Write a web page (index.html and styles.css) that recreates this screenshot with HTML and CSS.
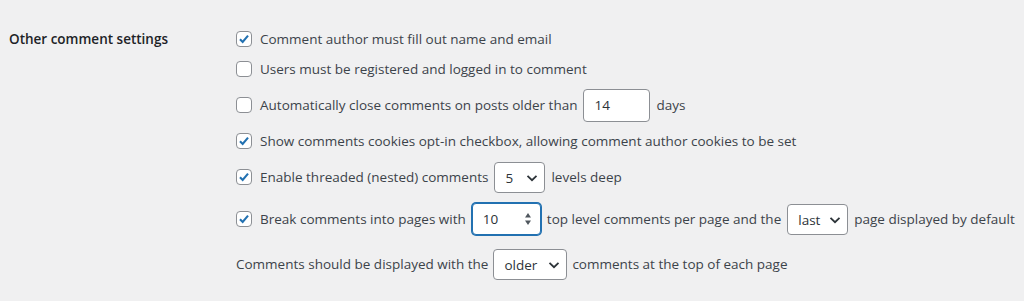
FILE: index.html
```html
<!DOCTYPE html>
<html lang="en">
<head>
    <meta charset="UTF-8">
    <title>Discussion Settings</title>
    <link rel="stylesheet" href="styles.css">
</head>
<body>
    <div class="form-row">
        <div class="row-label">Other comment settings</div>
        <div class="fieldset">
            <label class="opt">
                <span class="cb checked"><svg viewBox="0 0 16 16"><path d="M3.4 8.2 6.5 11.3 12.6 4.2" /></svg></span>
                Comment author must fill out name and email
            </label>
            <label class="opt">
                <span class="cb"></span>
                Users must be registered and logged in to comment
            </label>
            <label class="opt tall">
                <span class="cb"></span>
                Automatically close comments on posts older than
                <span class="field small-text">14</span>
                days
            </label>
            <label class="opt">
                <span class="cb checked"><svg viewBox="0 0 16 16"><path d="M3.4 8.2 6.5 11.3 12.6 4.2" /></svg></span>
                Show comments cookies opt-in checkbox, allowing comment author cookies to be set
            </label>
            <label class="opt tall">
                <span class="cb checked"><svg viewBox="0 0 16 16"><path d="M3.4 8.2 6.5 11.3 12.6 4.2" /></svg></span>
                Enable threaded (nested) comments
                <span class="select sel-5">5<svg viewBox="0 0 12 8"><path d="M1.5 1.8 6 6.2 10.5 1.8" /></svg></span>
                levels deep
            </label>
            <label class="opt tall">
                <span class="cb checked"><svg viewBox="0 0 16 16"><path d="M3.4 8.2 6.5 11.3 12.6 4.2" /></svg></span>
                Break comments into pages with
                <span class="field number focus">10
                    <span class="spin"><svg viewBox="0 0 8 16"><path d="M4 2 7 6.5 1 6.5Z M4 14 7 9.5 1 9.5Z" /></svg></span>
                </span>
                top level comments per page and the
                <span class="select sel-last">last<svg viewBox="0 0 12 8"><path d="M1.5 1.8 6 6.2 10.5 1.8" /></svg></span>
                page displayed by default
            </label>
            <p class="opt tall last">
                Comments should be displayed with the
                <span class="select sel-older">older<svg viewBox="0 0 12 8"><path d="M1.5 1.8 6 6.2 10.5 1.8" /></svg></span>
                comments at the top of each page
            </p>
        </div>
    </div>
</body>
</html>
```

FILE: styles.css
```css
body {
    margin: 0;
    background-color: #f0f0f1;
    color: #3c434a;
    font-family: "Open Sans", Arial, sans-serif;
    font-size: 13.5px;
}
.form-row {
    display: flex;
    padding: 28px 0 0 9px;
}
.row-label {
    width: 227px;
    flex-shrink: 0;
    color: #1d2327;
    font-weight: 600;
    line-height: 22px;
}
.fieldset {
    display: flex;
    flex-direction: column;
    gap: 8px;
}
.opt {
    display: flex;
    align-items: center;
    gap: 6px;
    min-height: 22px;
    margin: 0;
    white-space: nowrap;
}
.opt.tall {
    min-height: 34px;
}
.opt.last {
    margin-top: 3px;
    gap: 5px;
}
.cb {
    width: 16px;
    height: 16px;
    box-sizing: border-box;
    border: 1px solid #8c8f94;
    border-radius: 4px;
    background: #fff;
    margin-right: 2px;
    display: flex;
}
.cb svg {
    width: 14px;
    height: 14px;
    fill: none;
    stroke: #2271b1;
    stroke-width: 2.4;
}
.field {
    box-sizing: border-box;
    height: 33px;
    border: 1px solid #8c8f94;
    border-radius: 4px;
    background: #fff;
    color: #2c3338;
    display: flex;
    align-items: center;
    padding: 0 8px 0 10px;
}
.small-text {
    width: 67px;
}
.number {
    width: 69px;
    height: 32px;
    justify-content: space-between;
}
.number.focus {
    border-color: #2271b1;
    box-shadow: 0 0 0 1px #2271b1;
}
.spin svg {
    width: 8px;
    height: 16px;
    display: block;
    fill: #50575e;
}
.select {
    box-sizing: border-box;
    height: 31px;
    border: 1px solid #8c8f94;
    border-radius: 4px;
    background: #fff;
    color: #2c3338;
    display: flex;
    align-items: center;
    justify-content: space-between;
    padding: 2px 6px 0 10px;
}
.select svg {
    width: 12px;
    height: 8px;
    fill: none;
    stroke: #2c3338;
    stroke-width: 1.8;
}
.sel-5 {
    width: 51px;
}
.sel-last {
    width: 61px;
}
.sel-older {
    width: 74px;
}
```
